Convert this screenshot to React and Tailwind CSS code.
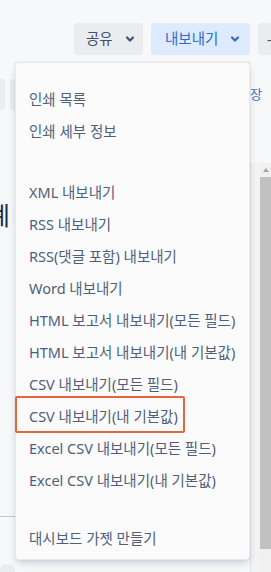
import React from "react";

const Chevron = ({ color }) => (
  <svg width="10" height="10" viewBox="0 0 10 10" className="shrink-0">
    <path d="M2 3.5 L5 6.5 L8 3.5" fill="none" stroke={color} strokeWidth="2.2" strokeLinecap="round" strokeLinejoin="round" />
  </svg>
);

const Item = ({ children }) => (
  <div className="h-[32px] flex items-center pl-[13px] text-[14.5px] text-[#505f79] whitespace-nowrap">{children}</div>
);

export default function App() {
  return (
    <div className="w-[271px] h-[572px] bg-[#f7f8f9] relative overflow-hidden flex flex-col" style={{ fontFamily: '"Noto Sans", "Noto Sans CJK KR", sans-serif' }}>
      {/* header */}
      <div className="h-[55px] flex items-end pl-[74px] gap-2 shrink-0 whitespace-nowrap">
        <div className="w-[69px] h-[32px] shrink-0 rounded-[3px] bg-[#ebecf0] flex items-center pl-[12px] gap-[12px] text-[14.5px] text-[#42526e]">
          <span>공유</span>
          <Chevron color="#42526e" />
        </div>
        <div className="w-[99px] h-[32px] shrink-0 rounded-[3px] bg-[#deebff] flex items-center pl-[14px] gap-[12px] text-[14.5px] text-[#2f6ac6]">
          <span>내보내기</span>
          <Chevron color="#2f6ac6" />
        </div>
        <div className="w-[40px] h-[32px] rounded-[3px] bg-[#ebecf0] shrink-0 flex items-center pl-[9px] text-[14px] text-[#42526e]">
          <span>-</span>
        </div>
      </div>

      {/* body */}
      <div className="flex flex-1">
        {/* left strip */}
        <div className="w-[15px] shrink-0 flex flex-col overflow-hidden">
          <div className="mt-[24px] flex gap-[5px] h-[31px]">
            <div className="w-[5px] shrink-0 bg-[#ebecf0] rounded-r-[3px]" />
            <div className="w-[8px] shrink-0 bg-[#ebecf0] rounded-[3px]" />
          </div>
          <div className="mt-[88px] h-[34px] ml-[-13px] text-[25px] leading-[34px] text-[#172b4d] whitespace-nowrap">계</div>
          <div className="mt-[284px] h-px bg-[#c1c7d0]" />
          <div className="mt-[47px] h-[10px] bg-[#ebecf0] rounded-t-[6px]" />
        </div>
        {/* center */}
        <div className="w-[235px] shrink-0" />
        {/* right strip */}
        <div className="w-[21px] shrink-0 flex flex-col">
          <div className="mt-[30px] text-[13px] leading-[18px] text-[#3a6fc4] whitespace-nowrap">장</div>
          <div className="mt-[60px] flex flex-1">
            <div className="w-[10px] border-l border-[#e6e7ea] bg-[#f2f3f5]" />
            <div className="w-[11px] bg-[#f0f0f0] flex flex-col items-center">
              <div className="h-[14px] flex items-center justify-center">
                <svg width="6" height="4" viewBox="0 0 6 4"><path d="M0 4 L3 0 L6 4 Z" fill="#a3a3a3" /></svg>
              </div>
              <div className="w-full h-[372px] bg-[#c1c1c1]" />
            </div>
          </div>
        </div>
      </div>

      {/* dropdown menu */}
      <div className="absolute left-[15px] top-[62px] w-[235px] h-[498px] bg-[#fbfbfc] rounded-[3px] border border-[#e9ebee] shadow-[0_4px_8px_-2px_rgba(9,30,66,0.22),0_0_1px_rgba(9,30,66,0.25)] flex flex-col">
        <div className="h-[21px]" />
        <Item>인쇄 목록</Item>
        <Item>인쇄 세부 정보</Item>
        <div className="h-[29px]" />
        <Item>XML 내보내기</Item>
        <Item>RSS 내보내기</Item>
        <Item>RSS(댓글 포함) 내보내기</Item>
        <Item>Word 내보내기</Item>
        <Item>HTML 보고서 내보내기(모든 필드)</Item>
        <Item>HTML 보고서 내보내기(내 기본값)</Item>
        <Item>CSV 내보내기(모든 필드)</Item>
        <div className="relative">
          <Item>CSV 내보내기(내 기본값)</Item>
          <div className="absolute left-[-1px] top-[-5px] w-[170px] h-[37px] border-2 border-[#e2673f] rounded-[2px] pointer-events-none" />
        </div>
        <Item>Excel CSV 내보내기(모든 필드)</Item>
        <Item>Excel CSV 내보내기(내 기본값)</Item>
        <div className="h-[26px]" />
        <Item>대시보드 가젯 만들기</Item>
      </div>
    </div>
  );
}
